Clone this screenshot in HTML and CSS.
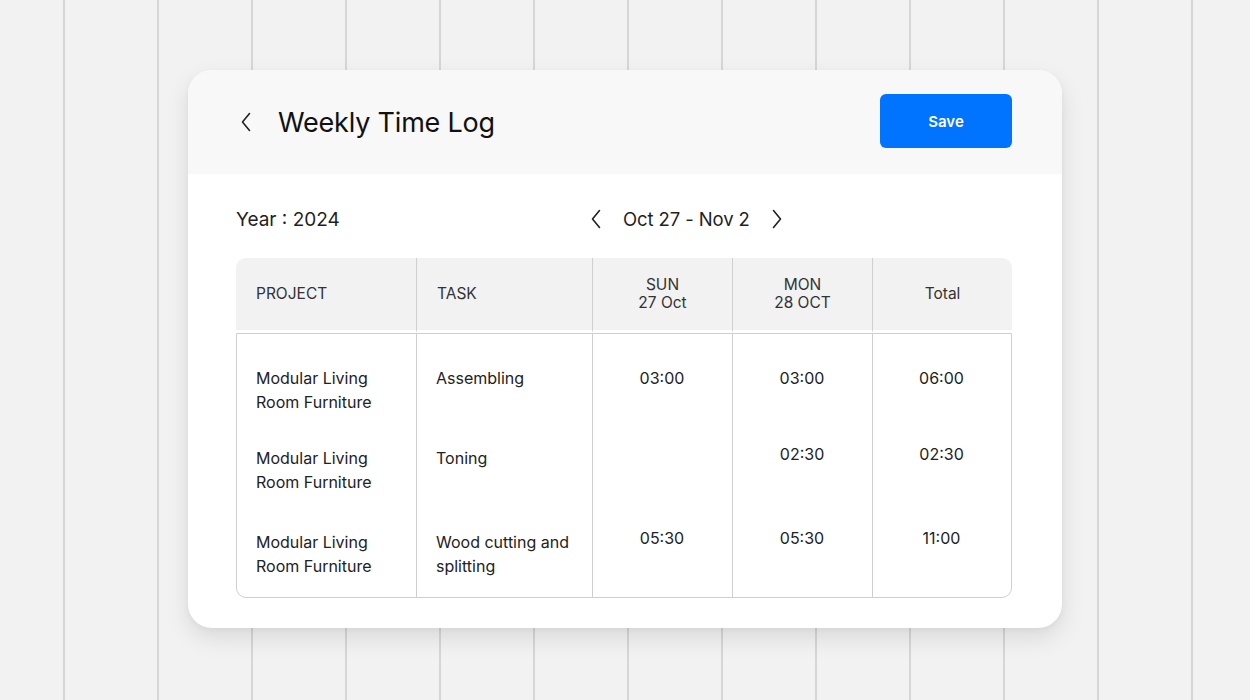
FILE: index.html
```html
<!DOCTYPE html>
<html>
<head>
  <title>Weekly Time Log</title>
  <link rel="stylesheet" href="styles.css">
</head>
<body>

<div class="card">
  <div class="card-head">
    <button class="icon-btn back" aria-label="Back">
      <svg width="10" height="20" viewBox="0 0 10 20"><polyline points="8.5,1.5 1.5,10 8.5,18.5"/></svg>
    </button>
    <h1>Weekly Time Log</h1>
    <button class="save">Save</button>
  </div>

  <div class="card-body">
    <div class="toolbar">
      <div class="year">Year : 2024</div>
      <div class="week-nav">
        <button class="icon-btn" aria-label="Previous week">
          <svg width="10" height="20" viewBox="0 0 10 20"><polyline points="8.5,1.5 1.5,10 8.5,18.5"/></svg>
        </button>
        <span class="range">Oct 27 - Nov 2</span>
        <button class="icon-btn" aria-label="Next week">
          <svg width="10" height="20" viewBox="0 0 10 20"><polyline points="1.5,1.5 8.5,10 1.5,18.5"/></svg>
        </button>
      </div>
    </div>

    <div class="log">
      <div class="log-head">
        <div class="hcell">PROJECT</div>
        <div class="hcell">TASK</div>
        <div class="hcell center">SUN<br>27 Oct</div>
        <div class="hcell center">MON<br>28 OCT</div>
        <div class="hcell center">Total</div>
      </div>

      <div class="log-body">
        <div class="row first">
          <div class="cell">Modular Living<br>Room Furniture</div>
          <div class="cell">Assembling</div>
          <div class="cell center">03:00</div>
          <div class="cell center">03:00</div>
          <div class="cell center">06:00</div>
        </div>
        <div class="row">
          <div class="cell">Modular Living<br>Room Furniture</div>
          <div class="cell">Toning</div>
          <div class="cell center time"></div>
          <div class="cell center time">02:30</div>
          <div class="cell center time">02:30</div>
        </div>
        <div class="row last">
          <div class="cell">Modular Living<br>Room Furniture</div>
          <div class="cell">Wood cutting and<br>splitting</div>
          <div class="cell center time">05:30</div>
          <div class="cell center time">05:30</div>
          <div class="cell center time">11:00</div>
        </div>
      </div>
    </div>
  </div>
</div>

</body>
</html>
```

FILE: styles.css
```css
body {
  margin: 0;
  height: 700px;
  font-family: Inter, "Noto Sans", sans-serif;
  color: #1f1f1f;
  background-color: #f2f2f2;
  background-image: linear-gradient(to right, #d6d6d6 1.5px, transparent 1.5px);
  background-size: 94px 100%;
  background-position: 63px 0;
  overflow: hidden;
}

.card {
  width: 874px;
  margin: 70px auto 0;
  background: #fff;
  border-radius: 24px;
  box-shadow: 0 10px 24px rgba(0, 0, 0, .10), 0 2px 6px rgba(0, 0, 0, .04);
  overflow: hidden;
}

.card-head {
  display: flex;
  align-items: center;
  height: 104px;
  padding: 0 50px 0 53px;
  background: #f8f8f8;
}

.card-head h1 {
  margin: 0 0 0 27px;
  font-size: 27px;
  font-weight: 400;
  letter-spacing: -0.2px;
  color: #111;
  flex: 1;
}

.icon-btn {
  display: flex;
  align-items: center;
  justify-content: center;
  padding: 0;
  border: 0;
  background: none;
  cursor: pointer;
}

.icon-btn polyline {
  fill: none;
  stroke: #222;
  stroke-width: 1.6;
  stroke-linecap: round;
  stroke-linejoin: round;
}

.save {
  width: 132px;
  height: 54px;
  margin-top: -2px;
  border: 0;
  border-radius: 6px;
  background: #0073ff;
  color: #fff;
  font-family: inherit;
  font-size: 15px;
  font-weight: 600;
  cursor: pointer;
}

.card-body {
  padding: 33px 50px 30px 48px;
}

.toolbar {
  display: flex;
  align-items: center;
  height: 24px;
  margin-bottom: 27px;
}

.year {
  width: 355px;
  font-size: 19px;
}

.week-nav {
  display: flex;
  align-items: center;
  gap: 22px;
}

.week-nav .range {
  font-size: 18.5px;
  letter-spacing: -0.1px;
}

.log {
  font-size: 16px;
  line-height: 24px;
}

.log-head {
  display: grid;
  grid-template-columns: 181px 176px 140px 140px 139px;
  border-radius: 10px 10px 0 0;
  overflow: hidden;
}

.hcell {
  display: flex;
  flex-direction: column;
  justify-content: center;
  height: 72px;
  padding: 0 20px;
  background: #f2f2f2;
  border-right: 1px solid #cfcfcf;
  border-bottom: 3px solid #fff;
  color: #333;
  font-size: 15.5px;
  line-height: 18px;
}

.hcell:last-child {
  border-right: 0;
}

.center {
  text-align: center;
  align-items: center;
}

.log-body {
  border: 1px solid #cfcfcf;
  border-radius: 0 0 10px 10px;
}

.row {
  display: grid;
  grid-template-columns: 180px 176px 140px 140px 138px;
}

.cell {
  padding: 0 20px 36px 19px;
  border-right: 1px solid #cfcfcf;
  color: #222;
}

.cell:last-child {
  border-right: 0;
}

.row.first .cell {
  padding-top: 32px;
  padding-bottom: 32px;
}

.row.last .cell {
  padding-bottom: 19px;
}

.cell.time {
  margin-top: -4px;
  padding-bottom: 44px;
}

.row.last .cell.time {
  padding-bottom: 23px;
}
```
